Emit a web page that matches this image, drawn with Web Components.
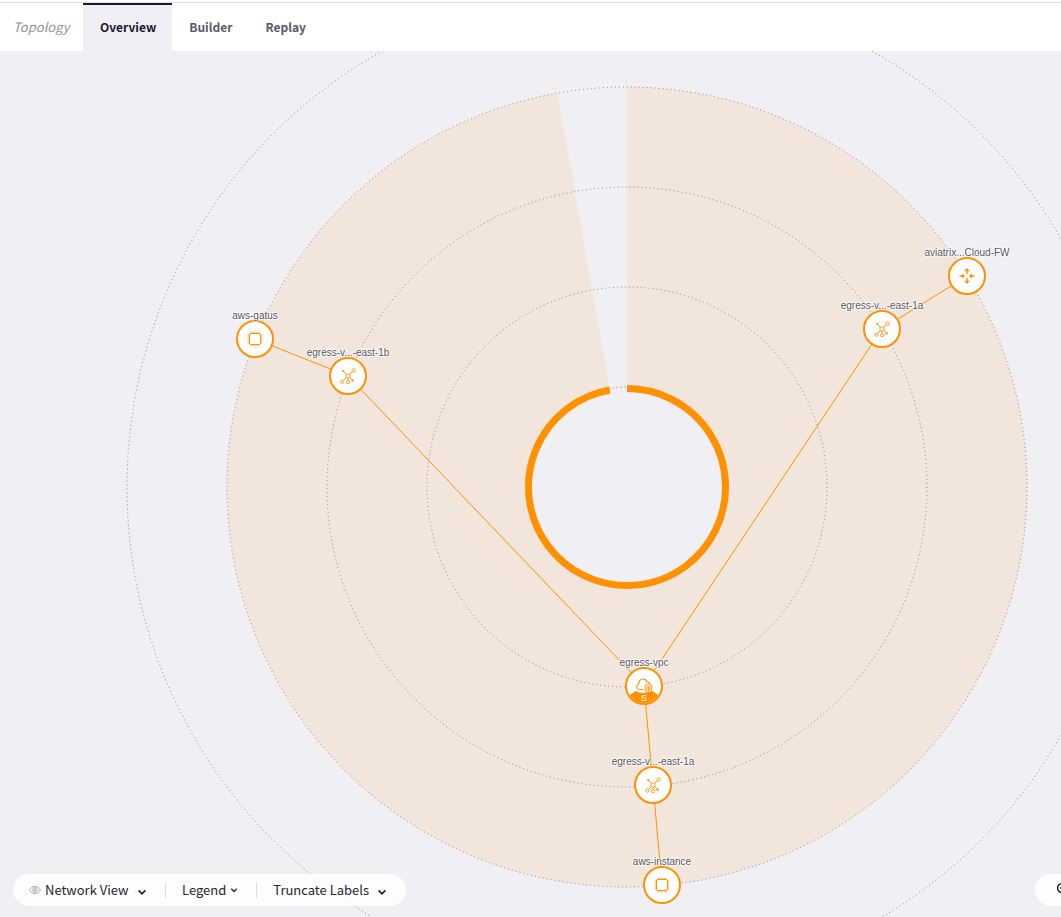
<!DOCTYPE html>
<html lang="en">
<head>
<meta charset="utf-8">
<title>Topology</title>
<style>
  html, body { margin: 0; height: 100%; }
  body {
    --ink: #1c1a30; --muted: #5c5a66; --accent: #ff9100; --ground: #f0eff4;
    --ui: "Noto Sans CJK SC", "Noto Sans", sans-serif;
    font-family: var(--ui); color: var(--ink); overflow: hidden;
  }
</style>
</head>
<body>
<topology-app></topology-app>
<script>
const define = (name, html, setup) => {
  const template = document.createElement('template');
  template.innerHTML = html;
  customElements.define(name, class extends HTMLElement {
    constructor() {
      super();
      this.attachShadow({ mode: 'open' }).append(template.content.cloneNode(true));
    }
    connectedCallback() { if (setup) setup(this, this.shadowRoot); }
  });
};

define('nav-tab', `
  <style>
    :host { display: flex; }
    a { display: flex; align-items: center; padding: 0 16px 2px 17px; border-top: 2px solid transparent;
        color: var(--muted); font-size: 12px; line-height: 20px; font-weight: 700; text-decoration: none; }
    :host([active]) a { background: var(--ground); border-color: var(--ink); color: var(--ink); }
  </style>
  <a href="#"><slot></slot></a>`,
  (el, root) => { if (el.hasAttribute('active')) root.querySelector('a').setAttribute('aria-current', 'page'); });

define('nav-bar', `
  <style>
    :host { display: block; background: #fff; padding-top: 2px; flex: none; }
    nav { display: flex; height: 48px; border-top: 1px solid #dedce8; }
    i { display: flex; align-items: center; box-sizing: border-box; width: 83px; padding: 0 0 0 13px;
        color: #929196; font-size: 13px; line-height: 20px; }
  </style>
  <nav aria-label="Topology">
    <i>Topology</i>
    <slot></slot>
  </nav>`);

const glyphs = {
  chip: `<rect x="4.5" y="4.5" width="11" height="11" rx="1.5" stroke-width="1"/>
    <path stroke-width=".9" opacity=".75" d="M6 4V2.5M8 4V2.5M10 4V2.5M12 4V2.5M14 4V2.5M6 16v1.5M8 16v1.5M10 16v1.5M12 16v1.5M14 16v1.5M4 6H2.5M4 8H2.5M4 10H2.5M4 12H2.5M4 14H2.5M16 6h1.5M16 8h1.5M16 10h1.5M16 12h1.5M16 14h1.5"/>`,
  subnet: `<g stroke-width=".9"><rect x="8" y="8" width="4" height="4" rx="1"/>
    <path d="M8.3 8.3 5.5 5.3M11.7 8.3l2.6-2.4M8.3 11.7l-2.8 2.8M10 12v2.5M11.8 11.6l2.6 2.5"/>
    <circle cx="15.6" cy="4.6" r="1.7"/><circle cx="4.3" cy="15.7" r="1.6"/><circle cx="10.2" cy="16.2" r="1.6"/></g>
    <circle cx="5.3" cy="5" r="1.1" fill="currentColor" stroke="none"/><circle cx="14.7" cy="14.4" r="1.2" fill="currentColor" stroke="none"/>`,
  router: `<path stroke-width="1.4" d="M10 8.2V4.5M10 11.8v3.7M6 10H2.5M14 10h3.5"/>
    <g fill="currentColor" stroke="none"><path d="M10 2 12.7 5.2H7.3zM10 18l2.7-3.2H7.3zM8.2 10 5.2 7.5v5zM11.8 10l3-2.5v5z"/></g>`,
  vpc: `<path d="M9.5 13.5H5a2.7 2.7 0 0 1-.3-5.3C4.5 5 6.4 3 9 3c2.1 0 3.5 1.2 4 3 1.8.1 2.9 1.1 3.1 2.6"/>
    <path stroke-width=".9" d="M11.2 9.2c2-1.6 4.4-1.6 6.4 0v6.2c-1.7 1.9-4.5 1.9-6.4 0zM13 10v5.5M14.4 9.5v7M15.8 10v5.5"/>`
};

define('topo-node', `
  <style>
    :host { position: absolute; left: calc(var(--x) * 1px); top: calc(var(--y) * 1px); width: 0; height: 0;
            color: var(--accent); }
    .disc { position: absolute; box-sizing: border-box; width: 38px; height: 38px; left: -19px; top: -19px;
            border: 2px solid currentColor; border-radius: 50%; background: #fff; overflow: hidden;
            display: grid; place-items: center; }
    .disc svg { width: 20px; height: 20px; fill: none; stroke: currentColor; stroke-width: 1.1; grid-area: 1 / 1; }
    .cap { position: absolute; inset: auto 0 0; height: 12px; background: currentColor;
           clip-path: polygon(0 100%, 0 50%, 26% 0, 38% 15%, 62% 15%, 74% 0, 100% 50%, 100% 100%); }
    .mark { position: absolute; inset: auto 0 0; text-align: center; color: #fff;
            font: 9px/10px "Liberation Sans", Arial, sans-serif; }
    .label { position: absolute; left: 0; top: -29px; transform: translateX(-50%); white-space: nowrap;
             font: 10px/12px "Liberation Sans", Arial, sans-serif; color: #56545f;
             text-shadow: 1px 0 1px #fff, -1px 0 1px #fff, 0 1px 1px #fff, 0 -1px 1px #fff, 0 0 1px #fff; }
  </style>
  <div class="disc"></div>
  <div class="label"><slot></slot></div>`,
  (el, root) => {
    const kind = el.getAttribute('kind'), disc = root.querySelector('.disc');
    disc.innerHTML = `<svg class="glyph" viewBox="0 0 20 20" aria-hidden="true">${glyphs[kind]}</svg>` +
      (kind === 'vpc' ? '<span class="cap"></span><span class="mark">S</span>' : '');
    el.style.setProperty('--x', el.getAttribute('x'));
    el.style.setProperty('--y', el.getAttribute('y'));
  });

/* Radial map: node coordinates are relative to the hub at the centre of the rings. */
define('radial-map', `
  <style>
    :host { display: block; position: absolute; inset: 0; overflow: hidden; }
    .origin { position: absolute; left: 627px; top: 436px; }
    svg { position: absolute; overflow: visible; width: 1px; height: 1px; left: 0; top: 0; }
    .rings { fill: none; stroke: #85828c; stroke-width: 1; stroke-dasharray: 1 3; }
    .edges { stroke: var(--accent); stroke-width: 1; }
  </style>
  <div class="origin">
    <svg aria-hidden="true">
      <path fill="#f2e5dc" d="M0-100V-400A400 400 0 1 1-69.5-393.9L-17.4-98.5A100 100 0 1 0 0-100Z"/>
      <g class="rings"><circle r="100"/><circle r="200"/><circle r="300"/><circle r="400"/><circle r="500"/></g>
      <path fill="none" stroke="var(--accent)" stroke-width="7" d="M0-98.5A98.5 98.5 0 1 1-17.1-97"/>
      <g class="edges"></g>
    </svg>
    <slot></slot>
  </div>`,
  (el, root) => {
    const at = id => el.querySelector('#' + id);
    root.querySelector('.edges').innerHTML = [...el.querySelectorAll('[to]')].map(n => {
      const m = at(n.getAttribute('to'));
      return `<line x1="${n.getAttribute('x')}" y1="${n.getAttribute('y')}" x2="${m.getAttribute('x')}" y2="${m.getAttribute('y')}"/>`;
    }).join('');
  });

const chevron = `<svg class="chev" viewBox="0 0 10 10" aria-hidden="true"><path d="M1.6 3.4 5 6.8l3.4-3.4"/></svg>`;
const controlCss = `
  select, button { appearance: none; border: 0; margin: 0; padding: 0; background: none; color: #26242e;
    font: 13px/20px var(--ui); }
  .chev { width: 10px; height: 10px; fill: none; stroke: #26242e; stroke-width: 1.7; flex: none; }`;

define('pill-select', `
  <style>${controlCss}
    :host { display: flex; align-items: center; }
    label { display: flex; align-items: center; }
    .chev { margin: 4px 0 0 8px; }
  </style>
  <slot name="icon"></slot>
  <label><select></select>${chevron}</label>`,
  (el, root) => {
    const select = root.querySelector('select');
    select.setAttribute('aria-label', el.getAttribute('label'));
    select.add(new Option(el.getAttribute('value')));
  });

define('pill-button', `
  <style>${controlCss}
    :host { display: flex; align-items: center; }
    button { display: flex; align-items: center; }
    .chev { width: 8px; height: 8px; margin-left: 4px; }
  </style>
  <button type="button" aria-haspopup="true"><slot></slot>${chevron}</button>`);

define('map-toolbar', `
  <style>
    :host { position: absolute; left: 13px; right: 0; bottom: 11px; display: flex; justify-content: space-between; }
    .pill { display: flex; align-items: center; box-sizing: border-box; height: 32px; background: rgb(255 255 255 / .85);
            border-radius: 16px; padding: 0 19px 0 16px; }
    hr { width: 1px; height: 16px; border: 0; margin: 0 16px 0 18px; background: #dddce3; }
    .eye { width: 12px; height: 10px; margin-right: 4px; fill: none; stroke: #aaa9ae; stroke-width: 1; }
    .zoom { width: 26px; border-radius: 16px 0 0 16px; padding: 0 0 0 21px; overflow: hidden; }
    .zoom button { border: 0; padding: 0; background: none; display: flex; flex: none; }
    .zoom svg { width: 14px; height: 14px; fill: none; stroke: #26242e; stroke-width: 1.6; margin-bottom: 2px; }
  </style>
  <div class="pill">
    <pill-select label="View" value="Network View">
      <svg slot="icon" class="eye" viewBox="0 0 12 10" aria-hidden="true"><path d="M.6 5C2.8.3 9.2.3 11.4 5 9.2 9.7 2.8 9.7.6 5z"/><circle cx="6" cy="5" r="2.2"/><circle cx="6" cy="5" r=".6"/></svg>
    </pill-select>
    <hr>
    <pill-button>Legend</pill-button>
    <hr>
    <pill-select label="Labels" value="Truncate Labels"></pill-select>
  </div>
  <div class="pill zoom">
    <button type="button" aria-label="Zoom out"><svg viewBox="0 0 14 14"><circle cx="6" cy="6" r="4.4"/><path d="M4 6h4M9.3 9.3 13 13"/></svg></button>
  </div>`);

define('topology-app', `
  <style>
    :host { display: flex; flex-direction: column; height: 100%; background: var(--ground); }
    main { position: relative; flex: 1; }
  </style>
  <nav-bar>
    <nav-tab active>Overview</nav-tab>
    <nav-tab>Builder</nav-tab>
    <nav-tab>Replay</nav-tab>
  </nav-bar>
  <main>
    <radial-map>
      <topo-node id="fw" kind="router" x="340" y="-211" to="east-a">aviatrix...Cloud-FW</topo-node>
      <topo-node id="east-a" kind="subnet" x="255" y="-158" to="vpc">egress-v...-east-1a</topo-node>
      <topo-node id="gatus" kind="chip" x="-372" y="-148" to="east-b">aws-gatus</topo-node>
      <topo-node id="east-b" kind="subnet" x="-279" y="-111" to="vpc">egress-v...-east-1b</topo-node>
      <topo-node id="vpc" kind="vpc" x="17" y="199">egress-vpc</topo-node>
      <topo-node id="east-c" kind="subnet" x="26" y="298" to="vpc">egress-v...-east-1a</topo-node>
      <topo-node id="instance" kind="chip" x="35" y="398" to="east-c">aws-instance</topo-node>
    </radial-map>
    <map-toolbar></map-toolbar>
  </main>`);
</script>
</body>
</html>
